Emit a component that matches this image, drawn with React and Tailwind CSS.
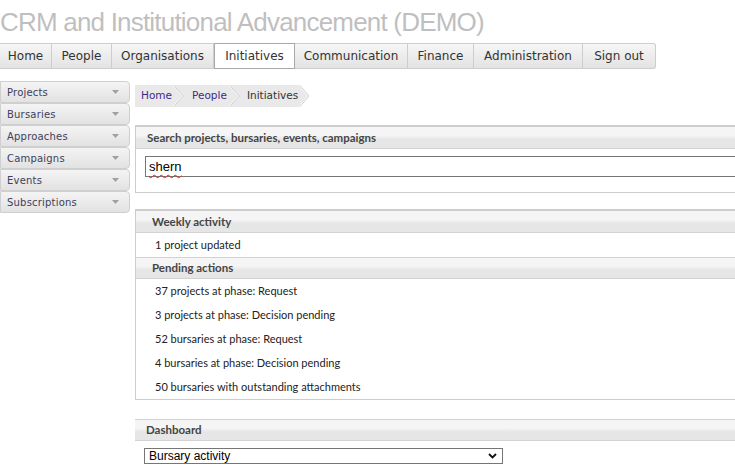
import React from "react";

const tabs = [
  ["Home", "w-[52px]"],
  ["People", "w-[60px]"],
  ["Organisations", "w-[102px]"],
  ["Initiatives", "w-[81px]"],
  ["Communication", "w-[113px]"],
  ["Finance", "w-[66px]"],
  ["Administration", "w-[109px]"],
  ["Sign out", "w-[73px]"],
];

const side = ["Projects", "Bursaries", "Approaches", "Campaigns", "Events", "Subscriptions"];

const pending = [
  "37 projects at phase: Request",
  "3 projects at phase: Decision pending",
  "52 bursaries at phase: Request",
  "4 bursaries at phase: Decision pending",
  "50 bursaries with outstanding attachments",
];

function Sep({ last }) {
  return (
    <svg width="11" height="22" viewBox="0 0 11 22" className="block shrink-0">
      {!last && <rect x="0" y="0" width="11" height="22" fill="#e9e9e9" />}
      {last && <polygon points="0,0 10,11 0,22" fill="#e9e9e9" />}
      <polyline points="0.5,0 10,11 0.5,22" fill="none" stroke="#cfcfcf" strokeWidth="1" />
      <polyline points="-0.5,0 9,11 -0.5,22" fill="none" stroke="#f8f8f8" strokeWidth="1" />
    </svg>
  );
}

function Header({ children, pl = "pl-[11px]", extra = "" }) {
  return (
    <div
      className={`h-[22px] flex items-center ${pl} bg-gradient-to-b from-[#f5f5f5] from-40% to-[#e6e6e6] to-60% text-[11.5px] font-bold text-[#454545] font-['Lato',sans-serif] ${extra}`}
    >
      {children}
    </div>
  );
}

export default function App() {
  return (
    <div className="w-[735px] h-[469px] overflow-hidden bg-white font-['DejaVu_Sans',sans-serif]">
      <h1 className="h-[43px] pt-[6px] text-[26px] leading-[32px] tracking-[-0.8px] text-[#bfbfbf] font-['Liberation_Sans',Arial,sans-serif] font-normal whitespace-nowrap">
        CRM and Institutional Advancement (DEMO)
      </h1>

      <nav className="flex h-[26px]">
        {tabs.map(([t, w], i) => {
          const active = t === "Initiatives";
          return (
            <div
              key={t}
              className={`${w} shrink-0 h-full flex items-center justify-center text-[12px] text-[#333] border-y ${
                active
                  ? "bg-white border-[#a9a9a9] border-x"
                  : "bg-gradient-to-b from-[#f6f6f6] to-[#e3e3e3] border-[#cdcdcd] border-r"
              } ${i === tabs.length - 1 ? "rounded-r-[3px]" : ""}`}
            >
              {t}
            </div>
          );
        })}
      </nav>

      <div className="flex mt-[12px]">
        <aside className="w-[130px] shrink-0">
          {side.map((s) => (
            <div
              key={s}
              className="h-[22px] flex items-center justify-between pl-[6px] pr-[10px] border border-[#cfcfcf] rounded-r-[4px] bg-gradient-to-b from-[#f4f4f4] to-[#e2e2e2] text-[10px] tracking-[0.2px] text-[#40405a]"
            >
              <span>{s}</span>
              <svg width="7" height="4" viewBox="0 0 7 4" className="block">
                <polygon points="0,0 7,0 3.5,4" fill="#a0a0a0" />
              </svg>
            </div>
          ))}
        </aside>

        <main className="ml-[5px] pt-[4px] w-[640px] shrink-0">
          <div className="flex h-[22px] items-stretch text-[10.5px]">
            <div className="bg-[#e9e9e9] flex items-center pl-[6px] pr-[1px] text-[#3b2a8c]">Home</div>
            <Sep />
            <div className="bg-[#e9e9e9] flex items-center pl-[8px] pr-[2px] text-[#3b2a8c]">People</div>
            <Sep />
            <div className="bg-[#e9e9e9] flex items-center pl-[7px] pr-[1px] text-[#333]">Initiatives</div>
            <Sep last />
          </div>

          <section className="mt-[18px] border border-t-2 border-[#cdcdcd] pb-[15px]">
            <Header extra="border-b border-[#d2d2d2]">Search projects, bursaries, events, campaigns</Header>
            <div className="mt-[7px] ml-[9px] h-[21px] border border-[#767676] flex items-center pl-[3px] text-[13px] text-black font-['Liberation_Sans',Arial,sans-serif]">
              <span className="underline decoration-wavy decoration-[#e02020] decoration-1 underline-offset-[3px]">shern</span>
            </div>
          </section>

          <section className="mt-[16px] border border-t-2 border-[#cdcdcd] font-['Lato',sans-serif]">
            <Header pl="pl-[16px]" extra="border-b border-[#d2d2d2]">Weekly activity</Header>
            <div className="h-[24px] flex items-center pl-[19px] text-[11px] text-[#222]">1 project updated</div>
            <Header pl="pl-[16px]" extra="border-y border-[#d2d2d2]">Pending actions</Header>
            {pending.map((p) => (
              <div key={p} className="h-[24px] flex items-center pl-[19px] text-[11px] text-[#222]">
                {p}
              </div>
            ))}
          </section>

          <section className="mt-[19px]">
            <Header extra="border-y border-[#d2d2d2]">Dashboard</Header>
            <div className="mt-[7px] ml-[9px] w-[359px] h-[16px] border border-[#767676] flex items-center justify-between pl-[4px] pr-[5px] text-[12px] text-black font-['Liberation_Sans',Arial,sans-serif] bg-white">
              <span>Bursary activity</span>
              <svg width="9" height="6" viewBox="0 0 9 6" className="block">
                <polyline points="1,1 4.5,4.5 8,1" fill="none" stroke="#111" strokeWidth="1.8" />
              </svg>
            </div>
          </section>
        </main>
      </div>
    </div>
  );
}
